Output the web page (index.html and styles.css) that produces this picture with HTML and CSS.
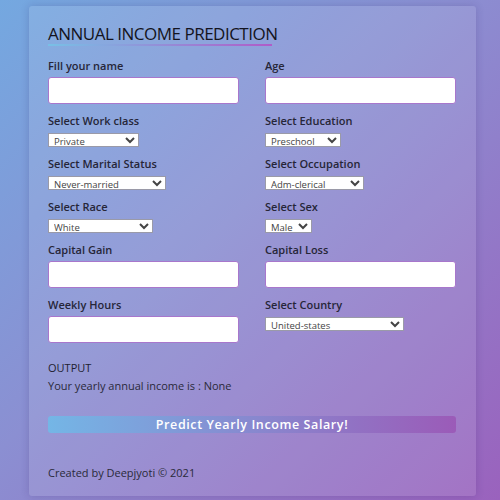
FILE: index.html
```html
<!DOCTYPE html>
<html>
<head>
<meta charset="utf-8">
<link rel="stylesheet" href="styles.css">
</head>
<body>
<div class="card">
  <h1 class="title">ANNUAL INCOME PREDICTION</h1>
  <div class="underline"></div>
  <form class="grid">
    <div class="field">
      <label class="label">Fill your name</label>
      <input class="text" type="text">
    </div>
    <div class="field">
      <label class="label">Age</label>
      <input class="text" type="text">
    </div>
    <div class="field">
      <label class="label">Select Work class</label>
      <select class="sel w-work"><option>Private</option></select>
    </div>
    <div class="field">
      <label class="label">Select Education</label>
      <select class="sel w-edu"><option>Preschool</option></select>
    </div>
    <div class="field">
      <label class="label">Select Marital Status</label>
      <select class="sel w-marital"><option>Never-married</option></select>
    </div>
    <div class="field">
      <label class="label">Select Occupation</label>
      <select class="sel w-occ"><option>Adm-clerical</option></select>
    </div>
    <div class="field">
      <label class="label">Select Race</label>
      <select class="sel w-race"><option>White</option></select>
    </div>
    <div class="field">
      <label class="label">Select Sex</label>
      <select class="sel w-sex"><option>Male</option></select>
    </div>
    <div class="field">
      <label class="label">Capital Gain</label>
      <input class="text" type="text">
    </div>
    <div class="field">
      <label class="label">Capital Loss</label>
      <input class="text" type="text">
    </div>
    <div class="field">
      <label class="label">Weekly Hours</label>
      <input class="text" type="text">
    </div>
    <div class="field">
      <label class="label">Select Country</label>
      <select class="sel w-country"><option>United-states</option></select>
    </div>
  </form>
  <div class="output">
    <div class="out-title">OUTPUT</div>
    <div class="out-text">Your yearly annual income is : None</div>
  </div>
  <button class="btn" type="button">Predict Yearly Income Salary!</button>
  <div class="footer">Created by Deepjyoti © 2021</div>
</div>
</body>
</html>
```
FILE: styles.css
```css
html, body {
  margin: 0;
  padding: 0;
  height: 100%;
}
body {
  background: linear-gradient(135deg, #74a8e0 0%, #8b8fd2 45%, #9a62bd 100%);
  font-family: "Open Sans", "Noto Sans", sans-serif;
  color: #1e1e30;
  padding-top: 6px;
  box-sizing: border-box;
}
.card {
  margin-left: 29px;
  width: 447px;
  box-sizing: border-box;
  padding: 19px 20px 15px 19px;
  background: rgba(255, 255, 255, 0.1);
  border-radius: 3px;
  box-shadow: 0 0 8px rgba(40, 20, 90, 0.18);
}
.title {
  margin: 0;
  font-size: 17px;
  line-height: 18px;
  font-weight: 400;
  color: #141420;
  letter-spacing: -0.5px;
}
.underline {
  margin-top: 1px;
  width: 224px;
  height: 2px;
  background: linear-gradient(to right, #78c0e6, #b05cc8);
}
.grid {
  margin-top: 12px;
  display: grid;
  grid-template-columns: 191px 191px;
  column-gap: 26px;
  row-gap: 9px;
}
.field {
  display: flex;
  flex-direction: column;
  align-items: flex-start;
}
.label {
  font-size: 11px;
  line-height: 16px;
  font-weight: 600;
  color: #262638;
  margin-bottom: 3px;
}
.text {
  width: 191px;
  height: 27px;
  box-sizing: border-box;
  background: #fff;
  border: 1px solid #a877cc;
  border-radius: 3px;
  padding: 0 6px;
}
.sel {
  margin-top: 1px;
  height: 14px;
  box-sizing: border-box;
  font-family: "Open Sans", "Noto Sans", sans-serif;
  font-size: 9.5px;
  color: #444;
  background: #fff;
  border: 1px solid #9a9aa8;
  border-radius: 0;
  padding: 0 1px;
}
.w-work { width: 91px; }
.w-edu { width: 76px; }
.w-marital { width: 118px; }
.w-occ { width: 99px; }
.w-race { width: 105px; }
.w-sex { width: 47px; }
.w-country { width: 139px; }
.output {
  margin-top: 17px;
}
.out-title {
  font-size: 11px;
  line-height: 16px;
  font-weight: 500;
  color: #1e1e30;
}
.out-text {
  margin-top: 2px;
  font-size: 11px;
  line-height: 16px;
  color: #2a2a3a;
}
.btn {
  display: block;
  margin-top: 22px;
  width: 408px;
  height: 17px;
  border: none;
  border-radius: 3px;
  padding: 0;
  background: linear-gradient(to right, #74b6e6, #9b5bb8);
  color: #fff;
  font-family: "Open Sans", "Noto Sans", sans-serif;
  font-size: 12.5px;
  font-weight: 600;
  letter-spacing: 0.6px;
  line-height: 17px;
}
.footer {
  margin-top: 32px;
  font-size: 11px;
  line-height: 16px;
  color: #2a2a3a;
}
```
